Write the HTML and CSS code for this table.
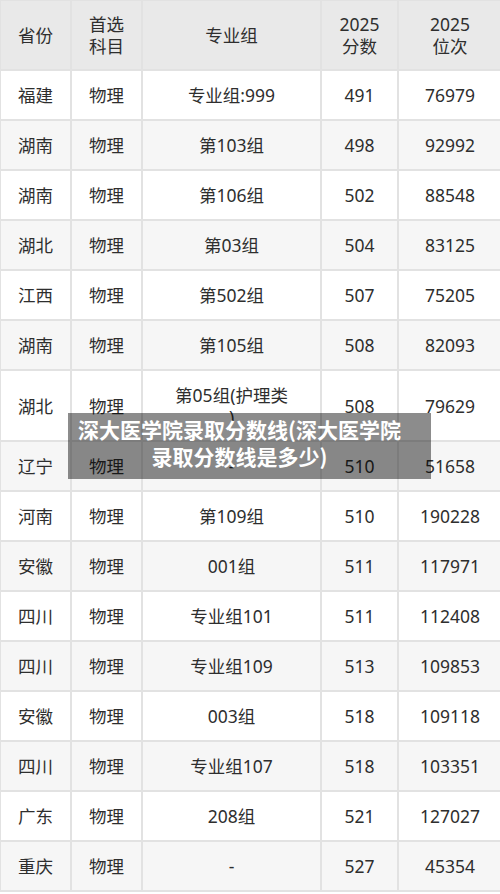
FILE: index.html
```
<!DOCTYPE html>
<html lang="zh">
<head>
<meta charset="utf-8">
<link rel="stylesheet" href="styles.css">
</head>
<body>
<div class="wrap">
<table class="score">
<colgroup>
<col class="c1"><col class="c2"><col class="c3"><col class="c4"><col class="c5">
</colgroup>
<thead>
<tr><th>省份</th><th>首选<br>科目</th><th>专业组</th><th>2025<br>分数</th><th>2025<br>位次</th></tr>
</thead>
<tbody>
<tr><td>福建</td><td>物理</td><td>专业组:999</td><td>491</td><td>76979</td></tr>
<tr><td>湖南</td><td>物理</td><td>第103组</td><td>498</td><td>92992</td></tr>
<tr><td>湖南</td><td>物理</td><td>第106组</td><td>502</td><td>88548</td></tr>
<tr><td>湖北</td><td>物理</td><td>第03组</td><td>504</td><td>83125</td></tr>
<tr><td>江西</td><td>物理</td><td>第502组</td><td>507</td><td>75205</td></tr>
<tr><td>湖南</td><td>物理</td><td>第105组</td><td>508</td><td>82093</td></tr>
<tr class="tall"><td>湖北</td><td>物理</td><td>第05组(护理类<br>)</td><td>508</td><td>79629</td></tr>
<tr><td>辽宁</td><td>物理</td><td>-</td><td>510</td><td>51658</td></tr>
<tr><td>河南</td><td>物理</td><td>第109组</td><td>510</td><td>190228</td></tr>
<tr><td>安徽</td><td>物理</td><td>001组</td><td>511</td><td>117971</td></tr>
<tr><td>四川</td><td>物理</td><td>专业组101</td><td>511</td><td>112408</td></tr>
<tr><td>四川</td><td>物理</td><td>专业组109</td><td>513</td><td>109853</td></tr>
<tr><td>安徽</td><td>物理</td><td>003组</td><td>518</td><td>109118</td></tr>
<tr><td>四川</td><td>物理</td><td>专业组107</td><td>518</td><td>103351</td></tr>
<tr><td>广东</td><td>物理</td><td>208组</td><td>521</td><td>127027</td></tr>
<tr><td>重庆</td><td>物理</td><td>-</td><td>527</td><td>45354</td></tr>
</tbody>
</table>
<div class="caption">深大医学院录取分数线(深大医学院<br>录取分数线是多少)</div>
</div>
</body>
</html>
```
FILE: styles.css
```
html, body {
  margin: 0;
  padding: 0;
  background: #fff;
}
.wrap {
  position: relative;
  width: 500px;
  overflow: hidden;
}
.score {
  width: 502px;
  margin-left: -1px;
  margin-top: -1px;
  border-collapse: collapse;
  table-layout: fixed;
  font-family: "Noto Sans", "Noto Sans CJK SC", sans-serif;
  font-size: 17.5px;
  color: #2e2e2e;
}
.c1 { width: 71px; }
.c2 { width: 71px; }
.c3 { width: 179px; }
.c4 { width: 77px; }
.c5 { width: 104px; }
.score th, .score td {
  border: 2px solid #e2e2e2;
  text-align: center;
  vertical-align: middle;
  padding: 0;
  font-weight: normal;
}
.score th {
  background: #e9e9e9;
  height: 68px;
  line-height: 22px;
}
.score td {
  height: 48px;
  line-height: 22px;
}
.score tbody tr:nth-child(even) td {
  background: #f6f6f6;
}
.score tr.tall td {
  height: 69px;
}
.caption {
  position: absolute;
  left: 68px;
  top: 413px;
  width: 363px;
  height: 66px;
  box-sizing: border-box;
  padding-top: 3px;
  padding-right: 20px;
  background: rgba(0, 0, 0, 0.45);
  color: #fff;
  font-family: "Noto Sans CJK SC", sans-serif;
  font-weight: bold;
  font-size: 21px;
  line-height: 27px;
  text-align: center;
}
```
